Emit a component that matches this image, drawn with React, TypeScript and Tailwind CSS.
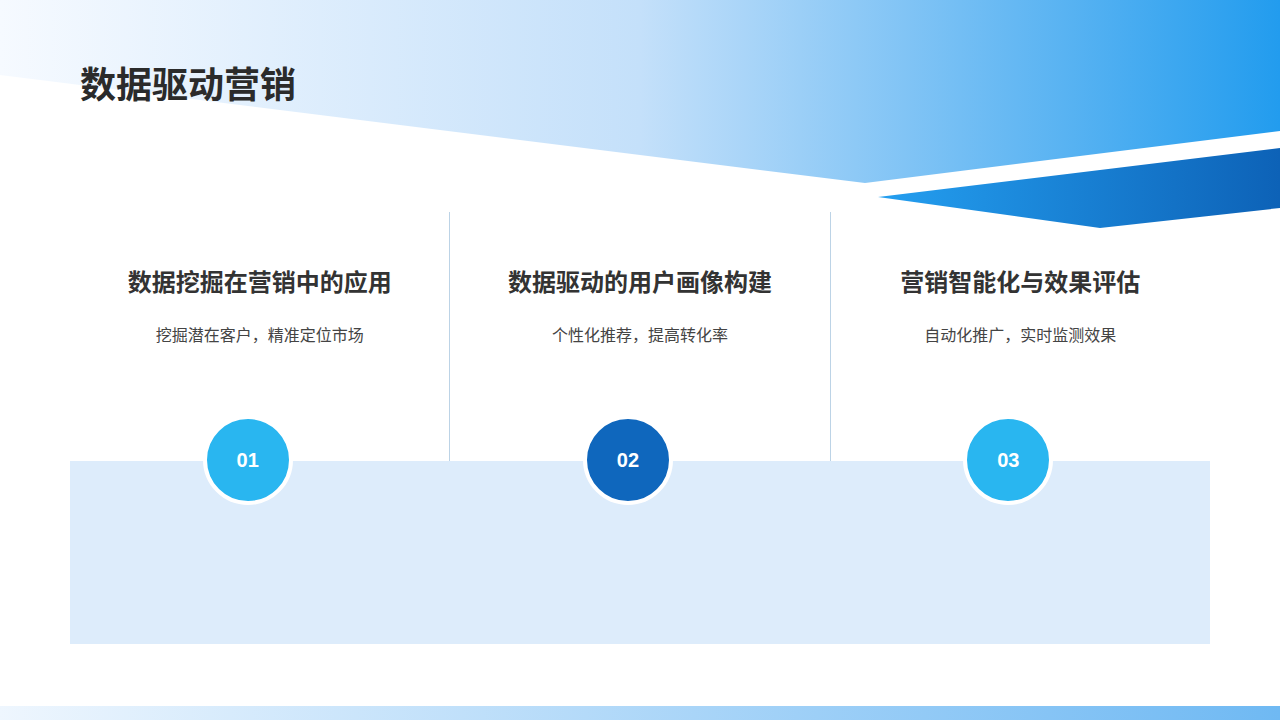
export default function App() {
  const cols = [
    { t: "数据挖掘在营销中的应用", s: "挖掘潜在客户，精准定位市场", n: "01", c: "bg-[#29b6f0]" },
    { t: "数据驱动的用户画像构建", s: "个性化推荐，提高转化率", n: "02", c: "bg-[#0f67bd]" },
    { t: "营销智能化与效果评估", s: "自动化推广，实时监测效果", n: "03", c: "bg-[#29b6f0]" },
  ];
  return (
    <div className="relative w-[1280px] h-[720px] overflow-hidden bg-white" style={{ fontFamily: '"Noto Sans CJK SC", "Noto Sans", sans-serif' }}>
      <svg className="absolute inset-0" width="1280" height="720">
        <defs>
          <linearGradient id="g1" x1="0" x2="1" y1="0" y2="0">
            <stop offset="0" stopColor="#f6faff" />
            <stop offset="0.5" stopColor="#c4e0fa" />
            <stop offset="1" stopColor="#229cee" />
          </linearGradient>
          <linearGradient id="g2" x1="0" x2="1" y1="0" y2="0">
            <stop offset="0" stopColor="#249ff0" />
            <stop offset="1" stopColor="#0d62b7" />
          </linearGradient>
          <linearGradient id="g3" x1="0" x2="1" y1="0" y2="0">
            <stop offset="0" stopColor="#eef6fe" />
            <stop offset="1" stopColor="#6fb9f3" />
          </linearGradient>
        </defs>
        <polygon points="0,0 1280,0 1280,131 865,183 0,75" fill="url(#g1)" />
        <polygon points="878,197 1280,148 1280,208 1100,228" fill="url(#g2)" />
        <rect x="0" y="706" width="1280" height="14" fill="url(#g3)" />
      </svg>
      <div className="relative">
        <h1 className="pl-[80px] pt-[59px] text-[36px] leading-[46px] font-bold text-[#2b2b2b]">数据驱动营销</h1>
        <div className="mx-[70px] mt-[107px] relative">
          <div className="flex h-[249px]">
            {cols.map((c, i) => (
              <div key={i} className={`relative flex-1 flex flex-col items-center ${i > 0 ? "border-l border-[#bcd3e6]" : ""}`}>
                <div className="mt-[53px] text-[24px] leading-[32px] font-bold text-[#333]">{c.t}</div>
                <div className="mt-[26px] text-[16px] leading-[22px] text-[#444]">{c.s}</div>
                <div className={`absolute bottom-[-44px] left-1/2 -ml-[57px] w-[90px] h-[90px] rounded-full border-[4px] border-white ${c.c} flex items-center justify-center text-white text-[20px] font-bold z-10`} style={{ fontFamily: '"Liberation Sans", Arial, sans-serif' }}>{c.n}</div>
              </div>
            ))}
          </div>
          <div className="h-[183px] bg-[#ddecfb]" />
        </div>
      </div>
    </div>
  );
}
